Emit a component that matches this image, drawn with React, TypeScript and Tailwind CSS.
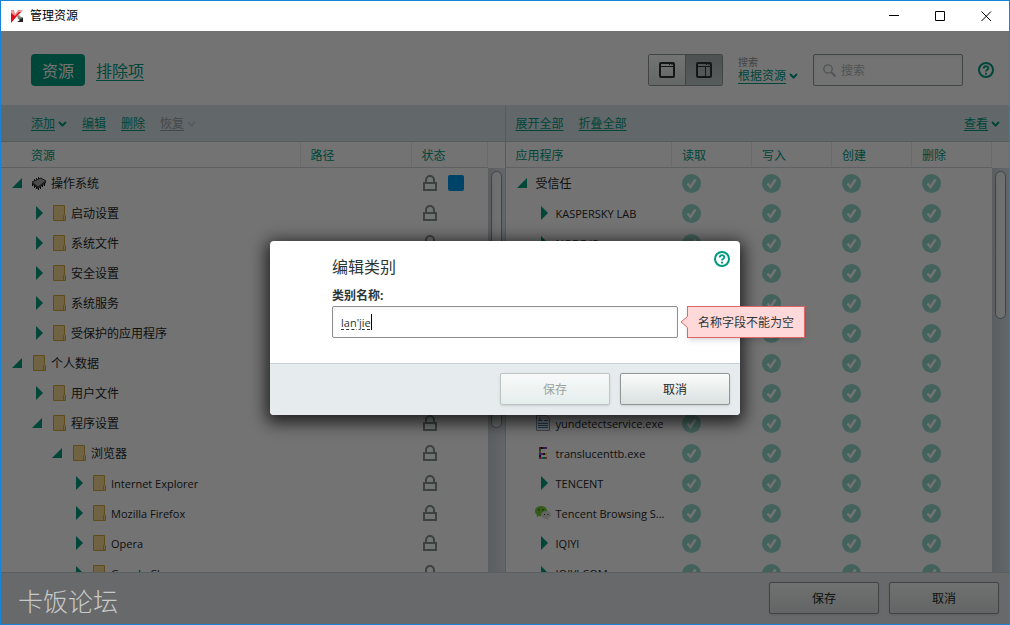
import { useState } from 'react';
import type { ReactNode } from 'react';
import clsx from 'clsx';

type IconKind = 'chip' | 'folder' | 'doc' | 'pixel' | 'chat';

interface ResourceRow {
  name: string;
  level: number;
  open?: boolean;
  icon: IconKind;
  marked?: boolean;
}

interface AppRow {
  name: string;
  level: number;
  open?: boolean;
  icon?: IconKind;
}

const resources: ResourceRow[] = [
  { name: '操作系统', level: 0, open: true, icon: 'chip', marked: true },
  { name: '启动设置', level: 1, icon: 'folder' },
  { name: '系统文件', level: 1, icon: 'folder' },
  { name: '安全设置', level: 1, icon: 'folder' },
  { name: '系统服务', level: 1, icon: 'folder' },
  { name: '受保护的应用程序', level: 1, icon: 'folder' },
  { name: '个人数据', level: 0, open: true, icon: 'folder' },
  { name: '用户文件', level: 1, icon: 'folder' },
  { name: '程序设置', level: 1, open: true, icon: 'folder' },
  { name: '浏览器', level: 2, open: true, icon: 'folder' },
  { name: 'Internet Explorer', level: 3, icon: 'folder' },
  { name: 'Mozilla Firefox', level: 3, icon: 'folder' },
  { name: 'Opera', level: 3, icon: 'folder' },
  { name: 'Google Chrome', level: 3, icon: 'folder' },
];

const apps: AppRow[] = [
  { name: '受信任', level: 0, open: true },
  { name: 'KASPERSKY LAB', level: 1 },
  { name: 'NODE.JS', level: 1 },
  { name: '', level: 1 },
  { name: '', level: 1 },
  { name: '', level: 1 },
  { name: '', level: 1 },
  { name: '', level: 1 },
  { name: 'yundetectservice.exe', level: 1, icon: 'doc' },
  { name: 'translucenttb.exe', level: 1, icon: 'pixel' },
  { name: 'TENCENT', level: 1 },
  { name: 'Tencent Browsing S...', level: 1, icon: 'chat' },
  { name: 'IQIYI', level: 1 },
  { name: 'IQIYI.COM', level: 1 },
];

const permissions = ['读取', '写入', '创建', '删除'];

const indents = ['pl-[9px]', 'pl-[29px]', 'pl-[49px]', 'pl-[69px]'];

// coloured squares of the translucenttb icon: x, y, colour
const pixels: [number, number, string][] = [
  [4, 2, '#e02020'], [6, 2, '#202020'], [8, 2, '#3040e0'], [10, 2, '#c02080'],
  [4, 4, '#20a040'], [4, 6, '#e08020'], [4, 8, '#3060ff'], [6, 8, '#d030d0'],
  [8, 8, '#202020'], [10, 8, '#f0e020'], [4, 10, '#202060'], [4, 12, '#f04040'],
  [6, 12, '#30c0d0'], [8, 12, '#20a040'], [10, 12, '#e06060'],
];

function Logo() {
  return (
    <svg className="h-[13px] w-[13px]" viewBox="0 0 13 13">
      <path d="M0 0h3l1 4 3-4h5L6 6 0 10z" fill="#ea9696" />
      <path d="M0 3l4 3L8 2h2L6 6l-6 7z" fill="#e30613" />
      <path d="M6 6l2-1 2 2h2v5H9l1-2-3-1z" fill="#8a8a8a" />
      <path d="M7 8l2 1 3-1v4H6l3-2z" fill="#222" />
    </svg>
  );
}

function Chevron() {
  return (
    <svg className="h-[6px] w-[9px]" viewBox="0 0 9 6" fill="none" stroke="currentColor" strokeWidth="2">
      <path d="M1 1l3.500 3.500L8 1" />
    </svg>
  );
}

function HelpIcon() {
  return (
    <svg className="h-4 w-4" viewBox="0 0 16 16" fill="none" stroke="currentColor">
      <circle cx="8" cy="8" r="7" strokeWidth="2" />
      <path d="M5.700 6.600C5.700 3.400 10.300 3.500 10.300 6.200 10.300 7.800 8 7.700 8 9.600" strokeWidth="1.8" />
      <path d="M8 10.800v1.800" strokeWidth="2" />
    </svg>
  );
}

function LockIcon() {
  return (
    <svg className="h-4 w-[14px]" viewBox="0 0 14 16" fill="none" stroke="#84928f" strokeWidth="2">
      <path d="M3 8V5a4 4 0 0 1 8 0v3" />
      <rect x="1" y="8" width="12" height="7" />
    </svg>
  );
}

function CheckIcon() {
  return (
    <svg className="h-[19px] w-[19px]" viewBox="0 0 19 19">
      <circle cx="9.5" cy="9.5" r="9.5" fill="#94dac9" />
      <path d="M5.500 9.500l3 3.500 5-7.500" fill="none" stroke="#fff" strokeWidth="2.4" />
    </svg>
  );
}

function Arrow({ open }: { open?: boolean }) {
  return (
    <svg className="h-[14px] w-4 shrink-0" viewBox="0 0 16 14" fill="#009b7e">
      {open ? <path d="M2 12L12 2v10z" /> : <path d="M6 0v14l7-7z" />}
    </svg>
  );
}

function ItemIcon({ kind }: { kind: IconKind }) {
  if (kind === 'chip') {
    return (
      <svg className="h-4 w-4 shrink-0" viewBox="0 0 16 16">
        <path d="M1 7l9-4 5 3-8 6z" fill="#a8a8a8" stroke="#333" />
        <path d="M1 7l6 5v2L1 9zM7 12l8-6v2l-8 6z" fill="#444" />
        <path d="M1.500 9v2M3.500 10v3M5.500 12v2M7.500 13v2M9.500 12v2M11.500 10v2M13.500 8v3" stroke="#000" />
        <path d="M3.500 4v2M5.500 3v2M7.500 2v2" stroke="#333" />
      </svg>
    );
  }
  if (kind === 'folder') {
    return (
      <svg className="h-4 w-4 shrink-0" viewBox="0 0 16 16" fill="#f5dc98" stroke="#d5a93a">
        <path d="M2.500.5h11v15h-11z" />
        <path d="M12.500 10.500l1-1 1 1v5h-2z" />
      </svg>
    );
  }
  if (kind === 'doc') {
    return (
      <svg className="h-4 w-4 shrink-0" viewBox="0 0 16 16" fill="none">
        <path d="M1.500.5h10l3 3v12h-13z" fill="#eef2f6" stroke="#8c98a4" />
        <path d="M3 5.500h4M5 2v3M9 5.500h4M3 8.500h10M3 10.500h10M3 12.500h10" stroke="#3a78b8" />
      </svg>
    );
  }
  if (kind === 'pixel') {
    return (
      <svg className="h-4 w-4 shrink-0" viewBox="0 0 16 16">
        {pixels.map(([x, y, color]) => (
          <rect key={`${x}-${y}`} x={x} y={y} width="2" height="2" fill={color} />
        ))}
      </svg>
    );
  }
  return (
    <svg className="h-4 w-4 shrink-0" viewBox="0 0 16 16">
      <path d="M6 1C2.500 1 0 3 0 6c0 2 1 3 2 4l-.5 2 2.500-1c6 1 8-2 8-5 0-3-2.500-5-6-5z" fill="#76c83a" />
      <path d="M11 6c-3 0-5 1.800-5 4s2 4 5 4l3 1-.5-2c1.500-.7 2.500-1.700 2.500-3 0-2.200-2-4-5-4z" fill="#dedede" />
      <path d="M4 4v1.500M8 4v1.500M9.500 9v1M13 9v1" stroke="#26401a" />
    </svg>
  );
}

function ItemName({ children }: { children: string }) {
  // latin names are set one size smaller than chinese ones
  const latin = children.charCodeAt(0) < 128;
  return <span className={clsx('pt-0.5 leading-4 whitespace-nowrap', latin ? 'text-[11px]' : 'text-xs')}>{children}</span>;
}

function ToolLink({ children, menu, disabled }: { children: ReactNode; menu?: boolean; disabled?: boolean }) {
  return (
    <button
      type="button"
      disabled={disabled}
      className={clsx('flex items-center gap-[3px]', disabled ? 'text-[#98a2a6]' : 'text-[#009b7e]')}
    >
      <span className="underline underline-offset-2">{children}</span>
      {menu && (
        <span className={clsx(disabled && 'opacity-40')}>
          <Chevron />
        </span>
      )}
    </button>
  );
}

function PushButton({ children, disabled }: { children: ReactNode; disabled?: boolean }) {
  return (
    <button
      type="button"
      disabled={disabled}
      className={clsx(
        'h-8 w-[110px] rounded-xs border bg-linear-to-b pt-0.5 text-xs shadow-sm',
        disabled
          ? 'border-[#bcc5c4] from-[#f8f9f9] to-[#e4eeec] text-[#9aa3a1]'
          : 'border-[#8f9795] from-[#fafbfb] to-[#d9e1df] text-[#1d2828]',
      )}
    >
      {children}
    </button>
  );
}

function HeadCell({ children, className }: { children: ReactNode; className?: string }) {
  return (
    <th className={clsx('h-[26px] border-b border-[#d0d6d8] p-0 text-left font-normal text-[#009b7e]', className)}>
      <div className="flex h-[25px] items-center border-r border-[#e8ebed] pt-0.5 pl-[10px]">{children}</div>
    </th>
  );
}

function ScrollBar({ children }: { children: ReactNode }) {
  return (
    <div className="w-[17px] shrink-0 pt-[26px]">
      <div className="h-full bg-linear-to-r from-[#c6d0d5] to-[#dae4e9] pt-[3px]">{children}</div>
    </div>
  );
}

function ResourcePanel() {
  return (
    <section className="flex min-w-0 flex-1 flex-col">
      <div className="flex h-[37px] shrink-0 items-center gap-[15px] border-b border-[#c0cbd1] bg-[#dae4e9] pt-0.5 pl-[30px]">
        <ToolLink menu>添加</ToolLink>
        <ToolLink>编辑</ToolLink>
        <ToolLink>删除</ToolLink>
        <ToolLink menu disabled>恢复</ToolLink>
      </div>
      <div className="flex min-h-0 flex-1">
        <div className="min-w-0 flex-1 overflow-hidden">
          <table className="w-full table-fixed border-separate border-spacing-0">
            <colgroup>
              <col />
              <col className="w-[111px]" />
              <col className="w-[76px]" />
            </colgroup>
            <thead>
              <tr>
                <HeadCell className="pl-5">资源</HeadCell>
                <HeadCell>路径</HeadCell>
                <HeadCell>状态</HeadCell>
              </tr>
            </thead>
            <tbody>
              {resources.map((row) => (
                <tr key={row.name}>
                  <td className="h-[30px] p-0">
                    <div className={clsx('flex items-center', indents[row.level])}>
                      <Arrow open={row.open} />
                      <span className="ml-[5px] flex items-center gap-1">
                        <ItemIcon kind={row.icon} />
                        <ItemName>{row.name}</ItemName>
                      </span>
                    </div>
                  </td>
                  <td />
                  <td className="p-0 pl-[11px]">
                    <div className="flex items-center gap-[11px]">
                      <LockIcon />
                      {row.marked && <span className="h-4 w-4 rounded-xs bg-[#0094e8]" />}
                    </div>
                  </td>
                </tr>
              ))}
            </tbody>
          </table>
        </div>
        <ScrollBar>
          <div className="mx-auto h-[257px] w-[11px] rounded-full border border-[#8c9a9c] bg-linear-to-r from-[#eef2f1] to-[#fafbfb]" />
        </ScrollBar>
      </div>
    </section>
  );
}

function ApplicationPanel() {
  return (
    <section className="flex min-w-0 flex-1 flex-col border-l border-[#c0cbd1]">
      <div className="flex h-[37px] shrink-0 items-center gap-[15px] border-b border-[#c0cbd1] bg-[#dae4e9] pt-0.5 pr-[9px] pl-[10px]">
        <ToolLink>展开全部</ToolLink>
        <ToolLink>折叠全部</ToolLink>
        <div className="ml-auto">
          <ToolLink menu>查看</ToolLink>
        </div>
      </div>
      <div className="flex min-h-0 flex-1">
        <div className="min-w-0 flex-1 overflow-hidden">
          <table className="w-full table-fixed border-separate border-spacing-0">
            <colgroup>
              <col />
              {permissions.map((p) => (
                <col key={p} className="w-20" />
              ))}
            </colgroup>
            <thead>
              <tr>
                <HeadCell>应用程序</HeadCell>
                {permissions.map((p) => (
                  <HeadCell key={p}>{p}</HeadCell>
                ))}
              </tr>
            </thead>
            <tbody>
              {apps.map((row, i) => (
                <tr key={i}>
                  <td className="h-[30px] p-0">
                    <div className={clsx('flex items-center', indents[row.level])}>
                      {row.icon ? <ItemIcon kind={row.icon} /> : <Arrow open={row.open} />}
                      <span className="ml-[5px] flex">
                        <ItemName>{row.name}</ItemName>
                      </span>
                    </div>
                  </td>
                  {permissions.map((p) => (
                    <td key={p} className="p-0 pl-[10px]">
                      <CheckIcon />
                    </td>
                  ))}
                </tr>
              ))}
            </tbody>
          </table>
        </div>
        <ScrollBar>
          <div className="mx-auto h-[148px] w-[11px] rounded-full border border-[#8c9a9c] bg-linear-to-r from-[#eef2f1] to-[#fafbfb]" />
        </ScrollBar>
      </div>
    </section>
  );
}

function Header() {
  return (
    <header className="flex h-[74px] shrink-0 items-center justify-between bg-white pt-1 pr-[15px] pl-[30px]">
      <nav className="flex items-center gap-[11px] text-base">
        <button type="button" className="h-8 w-[54px] rounded-sm bg-[#009b7e] pt-0.5 text-white">
          资源
        </button>
        <a href="#exclusions" className="pt-0.5 text-[#009b7e] underline underline-offset-3">
          排除项
        </a>
      </nav>
      <div className="flex items-center gap-[15px]">
        <div className="flex h-8 w-[75px] overflow-hidden rounded-xs border border-[#8f9a9a] text-[#2b3434]">
          <button
            type="button"
            aria-label="单栏"
            className="flex flex-1 items-center justify-center border-r border-[#8f9a9a] bg-linear-to-b from-white to-[#dfe6e4]"
          >
            <svg className="h-4 w-4" viewBox="0 0 16 16" fill="none" stroke="currentColor">
              <rect x="1" y="1" width="14" height="14" rx="1" strokeWidth="2" />
              <path d="M1 4.500h14M10 2.500h1M12.500 2.500h1" />
            </svg>
          </button>
          <button
            type="button"
            aria-label="双栏"
            className="flex flex-1 items-center justify-center bg-linear-to-b from-[#a9b3b3] to-[#c3cbca]"
          >
            <svg className="h-4 w-4" viewBox="0 0 16 16" fill="none" stroke="currentColor">
              <rect x="1" y="1" width="14" height="14" rx="1" strokeWidth="2" />
              <path d="M1 4.500h14M10 2.500h1M12.500 2.500h1M9.500 5v9" />
            </svg>
          </button>
        </div>
        <div className="flex flex-col">
          <label htmlFor="scope" className="text-[10px] leading-3 text-[#8b9696]">
            搜索
          </label>
          <div className="flex items-center gap-[3px] text-[#009b7e]">
            <select id="scope" className="h-4 w-12 appearance-none border-b border-[#009b7e] text-xs leading-4">
              <option>根据资源</option>
            </select>
            <Chevron />
          </div>
        </div>
        <div className="flex h-8 w-[150px] items-center gap-[5px] rounded-xs border border-[#8f9a9a] bg-white pl-[9px] shadow-inner">
          <svg className="h-[13px] w-[13px] shrink-0" viewBox="0 0 13 13" fill="none" stroke="#b4bbbb">
            <circle cx="5" cy="5" r="4.200" strokeWidth="1.300" />
            <path d="M8 8l4.500 4.500" strokeWidth="2" />
          </svg>
          <input
            type="search"
            aria-label="搜索"
            placeholder="搜索"
            className="w-full min-w-0 bg-transparent pt-0.5 text-xs outline-none placeholder:text-[#b4bbbb]"
          />
        </div>
        <button type="button" aria-label="帮助" className="text-[#009b7e]">
          <HelpIcon />
        </button>
      </div>
    </header>
  );
}

function EditDialog() {
  const [name, setName] = useState("lan'jie");

  return (
    <div
      role="dialog"
      aria-labelledby="dialog-title"
      className="relative w-[470px] rounded-sm bg-white text-[#2b3636] shadow-[0_4px_16px_4px_rgba(0,0,0,0.7)]"
    >
      <div className="h-[122px] px-[62px] pt-[14px]">
        <h1 id="dialog-title" className="text-base leading-6">
          编辑类别
        </h1>
        <label htmlFor="category" className="mt-[9px] block text-xs leading-4 font-bold">
          类别名称:
        </label>
        <div className="relative mt-0.5">
          <input
            id="category"
            value={name}
            onChange={(e) => setName(e.target.value)}
            className="h-8 w-full rounded-xs border border-[#8b8f8f] pt-0.5 pl-2 text-[11px] underline decoration-dashed underline-offset-2 shadow-inner outline-none"
          />
          <span className="absolute top-2 left-[39px] h-4 w-px bg-black" />
          <div className="absolute top-0 left-full ml-[9px] flex h-8 items-center border border-[#e06464] bg-[#ffd9d9] px-[10px] pt-0.5 text-xs whitespace-nowrap shadow-md">
            名称字段不能为空
            <svg className="absolute top-[9px] -left-2 h-3 w-2" viewBox="0 0 8 12">
              <path d="M8 0L1 6l7 6z" fill="#ffd9d9" />
              <path d="M7.500.5L1 6l6.500 5.500" fill="none" stroke="#e06464" />
            </svg>
          </div>
        </div>
      </div>
      <div className="flex justify-end gap-[10px] rounded-b-sm border-t border-[#c5d1d7] bg-[#e6ebee] px-[10px] pt-[9px] pb-[10px]">
        <PushButton disabled>保存</PushButton>
        <PushButton>取消</PushButton>
      </div>
      <button type="button" aria-label="帮助" className="absolute top-[10px] right-[10px] text-[#009b7e]">
        <HelpIcon />
      </button>
    </div>
  );
}

function TitleBar() {
  return (
    <div className="flex h-[30px] shrink-0 items-center bg-white pl-[10px] text-black">
      <Logo />
      <span className="ml-[6px] text-xs">管理资源</span>
      <div className="ml-auto flex h-full">
        <button type="button" aria-label="最小化" className="flex w-[46px] items-center justify-center">
          <svg className="h-[11px] w-[11px]" viewBox="0 0 11 11" stroke="currentColor">
            <path d="M0 4.500h10" />
          </svg>
        </button>
        <button type="button" aria-label="最大化" className="flex w-[46px] items-center justify-center">
          <svg className="h-[11px] w-[11px]" viewBox="0 0 11 11" fill="none" stroke="currentColor">
            <path d="M.5.5h9v9h-9z" />
          </svg>
        </button>
        <button type="button" aria-label="关闭" className="flex w-[46px] items-center justify-center">
          <svg className="h-[11px] w-[11px]" viewBox="0 0 11 11" stroke="currentColor">
            <path d="M.5.5l9.500 9.500M10 .5L.5 10" />
          </svg>
        </button>
      </div>
    </div>
  );
}

export default function App() {
  return (
    <div className="flex h-screen flex-col border border-[#1883d7] font-['Open_Sans','Noto_Sans_CJK_SC',sans-serif] text-xs text-[#1d2828]">
      <TitleBar />
      <div className="relative flex min-h-0 flex-1 flex-col bg-white">
        <Header />
        <main className="flex min-h-0 flex-1">
          <ResourcePanel />
          <ApplicationPanel />
        </main>
        <footer className="flex shrink-0 justify-end gap-[10px] border-t border-[#c5d1d7] bg-[#e7e9ed] px-[10px] pt-[9px] pb-[10px]">
          <PushButton>保存</PushButton>
          <PushButton>取消</PushButton>
        </footer>

        {/* modal layer */}
        <div className="absolute inset-0 flex items-center justify-center bg-black/55">
          <EditDialog />
          <span className="absolute bottom-[5px] left-[17px] text-[25px] leading-9 font-light text-[#c8c9ca]">卡饭论坛</span>
        </div>
      </div>
    </div>
  );
}
